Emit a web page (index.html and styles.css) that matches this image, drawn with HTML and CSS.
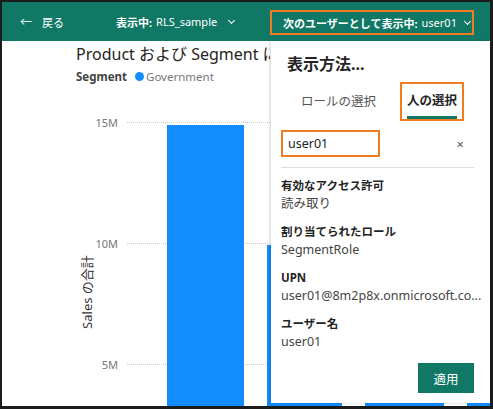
FILE: index.html
```html
<!DOCTYPE html>
<html>
<head>
<meta charset="utf-8">
<link rel="stylesheet" href="styles.css">
</head>
<body>
<div class="frame">
  <header class="topbar">
    <div class="back"><span class="arrow">←</span><span>戻る</span></div>
    <div class="viewing"><b>表示中:</b> RLS_sample <span class="chev"></span></div>
    <div class="asuser"><b>次のユーザーとして表示中:</b> user01 <span class="chev"></span></div>
  </header>
  <main class="content">
    <div class="chart">
      <div class="title">Product および Segment による Sales の合計</div>
      <div class="legend"><b>Segment</b><span class="dot"></span><span class="lg">Government</span></div>
      <div class="plot">
        <div class="ylabel">Sales の合計</div>
        <div class="grid">
          <div class="gline"><span>15M</span><i></i></div>
          <div class="gline"><span>10M</span><i></i></div>
          <div class="gline"><span>5M</span><i></i></div>
        </div>
        <div class="bar" style="left:165px;width:77px;top:84px"></div>
        <div class="bar" style="left:265px;width:75px;top:204px"></div>
        <div class="bar" style="left:363px;width:79px;top:250px"></div>
        <div class="bar" style="left:465px;width:30px;top:300px"></div>
      </div>
    </div>
    <aside class="panel">
      <div class="ptitle">表示方法...</div>
      <div class="tabs">
        <div class="tab">ロールの選択</div>
        <div class="tab active"><span>人の選択</span></div>
      </div>
      <div class="search">
        <div class="input">user01</div>
        <span class="x">×</span>
      </div>
      <div class="divider"></div>
      <div class="field"><div class="lbl">有効なアクセス許可</div><div class="val">読み取り</div></div>
      <div class="field"><div class="lbl">割り当てられたロール</div><div class="val">SegmentRole</div></div>
      <div class="field"><div class="lbl">UPN</div><div class="val">user01@8m2p8x.onmicrosoft.co...</div></div>
      <div class="field"><div class="lbl">ユーザー名</div><div class="val">user01</div></div>
      <div class="actions"><button class="apply">適用</button></div>
    </aside>
  </main>
</div>
</body>
</html>
```
FILE: styles.css
```css
* { box-sizing: border-box; }
html, body { margin: 0; padding: 0; background: #fff; }
body { font-family: "Noto Sans", "Noto Sans CJK JP", sans-serif; }
.frame {
  width: 493px; height: 409px;
  border: 2px solid #1b1b1b; border-right-width: 3px; border-bottom-width: 3px;
  position: relative; overflow: hidden; background: #fff;
}
.topbar {
  height: 39px; background: #117865; color: #fff;
  display: flex; align-items: center; font-size: 11px;
  padding-left: 18px; position: relative;
}
.back { display: flex; gap: 10px; align-items: center; }
.arrow { font-size: 12px; }
.viewing { margin-left: 52px; display: flex; align-items: center; gap: 4px; }
.viewing b, .asuser b { font-weight: 700; }
.chev {
  display: inline-block; width: 5px; height: 5px;
  border-right: 1.2px solid #fff; border-bottom: 1.2px solid #fff;
  transform: rotate(45deg); margin: -3px 0 0 8px;
}
.asuser .chev { margin-left: 4px; }
.asuser {
  position: absolute; left: 268px; top: 8px; width: 204px; height: 25px;
  border: 2px solid #f07c22; display: flex; align-items: center; gap: 4px;
  padding-left: 11px; white-space: nowrap;
}
.content { position: relative; height: 365px; }
.chart { padding: 3px 0 0 74px; color: #252423; }
.title { font-size: 16px; white-space: nowrap; line-height: 20px; width: 194px; overflow: hidden; }
.legend { display: flex; align-items: center; font-size: 11.5px; margin-top: 5px; color: #605e5c; }
.legend b { color: #444; margin-right: 8px; }
.dot { width: 9px; height: 9px; border-radius: 50%; background: #118dff; margin-right: 2px; }
.lg { color: #777; }
.plot { position: absolute; left: 0; top: 0; width: 100%; height: 365px; }
.ylabel {
  position: absolute; left: 76px; top: 291px; width: 80px; text-align: center;
  transform: rotate(-90deg); transform-origin: left top;
  font-size: 13px; color: #333; white-space: nowrap; line-height: 18px;
}
.grid { position: absolute; left: 0; top: 74px; width: 100%; display: flex; flex-direction: column; gap: 106px; }
.gline { display: flex; align-items: center; height: 15px; }
.gline span { width: 116px; text-align: right; font-size: 11px; color: #777; padding-right: 0; margin-right: 9px; }
.gline i { flex: 1; border-top: 1.5px dotted #ccc; }
.bar { position: absolute; bottom: -2px; background: #118dff; }
.panel {
  position: absolute; left: 269px; top: 0; width: 220px; height: 362px;
  background: #fff; box-shadow: -1px 0 3px rgba(0,0,0,0.18);
  padding: 12px 17px 0 10px; color: #252423;
}
.ptitle { font-size: 16px; font-weight: 700; line-height: 22px; margin-left: 6px; }
.tabs { display: flex; margin-top: 10px; margin-left: 20px; gap: 30px; font-size: 12.5px; }
.tab { color: #555; height: 34px; padding-top: 6px; }
.tab.active {
  color: #252423; font-weight: 600; position: relative;
  outline: 2px solid #f07c22; outline-offset: 0; padding: 6px 5px 0; margin-left: -4px; margin-top: -1px; height: 35px;
}
.tab.active span { display: inline-block; padding-bottom: 7px; border-bottom: 3px solid #117865; }
.search { display: flex; align-items: center; justify-content: space-between; margin-top: 11px; }
.input {
  width: 99px; height: 27px; border: 2px solid #f07c22; font-size: 12.5px;
  padding: 3px 5px; color: #252423;
}
.x { color: #555; font-size: 13px; margin-right: 10px; }
.divider { border-top: 1px solid #ddd; margin: 10px 0 0 0; }
.field { margin-top: 9px; }
.field + .field { margin-top: 9px; }
.lbl { font-size: 11.5px; font-weight: 700; line-height: 17px; }
.val { font-size: 12.5px; color: #444; line-height: 20px; }
.actions { display: flex; justify-content: flex-end; margin-top: 11px; }
.apply {
  background: #117865; color: #fff; border: 0; width: 56px; height: 30px;
  font-family: inherit; font-size: 12.5px;
}
```
